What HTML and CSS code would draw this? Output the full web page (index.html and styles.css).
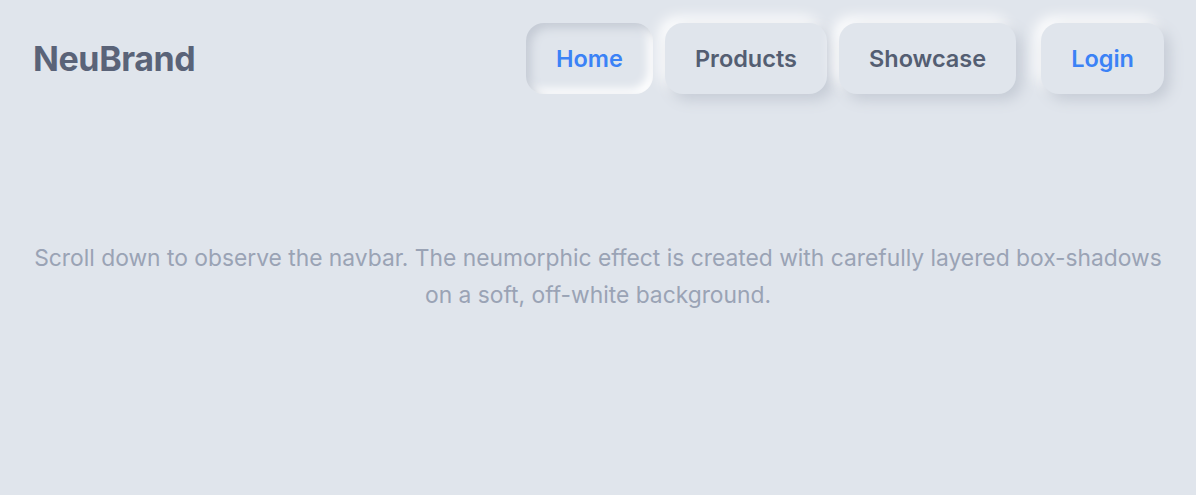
FILE: index.html
```html
<!DOCTYPE html>
<html lang="en">
<head>
<meta charset="utf-8">
<title>NeuBrand</title>
<link rel="stylesheet" href="styles.css">
</head>
<body>
<header class="navbar">
  <div class="logo">NeuBrand</div>
  <nav class="nav">
    <ul class="nav-links">
      <li><a class="nav-btn active" href="#">Home</a></li>
      <li><a class="nav-btn" href="#">Products</a></li>
      <li><a class="nav-btn" href="#">Showcase</a></li>
    </ul>
    <a class="nav-btn login" href="#">Login</a>
  </nav>
</header>
<main class="content">
  <p class="intro">Scroll down to observe the navbar. The neumorphic effect is created with carefully layered box-shadows on a soft, off-white background.</p>
</main>
</body>
</html>
```
FILE: styles.css
```css
* { box-sizing: border-box; }
html, body {
  margin: 0;
  background: #e0e5ec;
  font-family: Inter, "Noto Sans", sans-serif;
}
.navbar {
  display: flex;
  align-items: center;
  justify-content: space-between;
  padding: 23px 32px;
}
.logo {
  font-size: 34px;
  font-weight: 700;
  color: #5a6378;
  letter-spacing: -0.4px;
  padding-left: 1px;
}
.nav {
  display: flex;
  align-items: center;
  gap: 25px;
}
.nav-links {
  display: flex;
  gap: 12px;
  list-style: none;
  margin: 0;
  padding: 0;
}
.nav-btn {
  display: block;
  height: 71px;
  line-height: 71px;
  padding: 0 30px;
  border-radius: 18px;
  font-size: 23.5px;
  font-weight: 600;
  color: #545e72;
  text-decoration: none;
  background: #e0e5ec;
  box-shadow: 6px 6px 14px #c5cbd5, -6px -6px 14px #ffffff;
}
.nav-btn.active {
  color: #3b82f6;
  box-shadow: inset 5px 5px 10px #c5cbd5, inset -5px -5px 10px #ffffff;
}
.nav-btn.login { color: #3b82f6; }
.content {
  padding: 122px 32px 0;
}
.intro {
  margin: 0;
  text-align: center;
  font-size: 22.8px;
  line-height: 37px;
  color: #9aa3b5;
}
```
